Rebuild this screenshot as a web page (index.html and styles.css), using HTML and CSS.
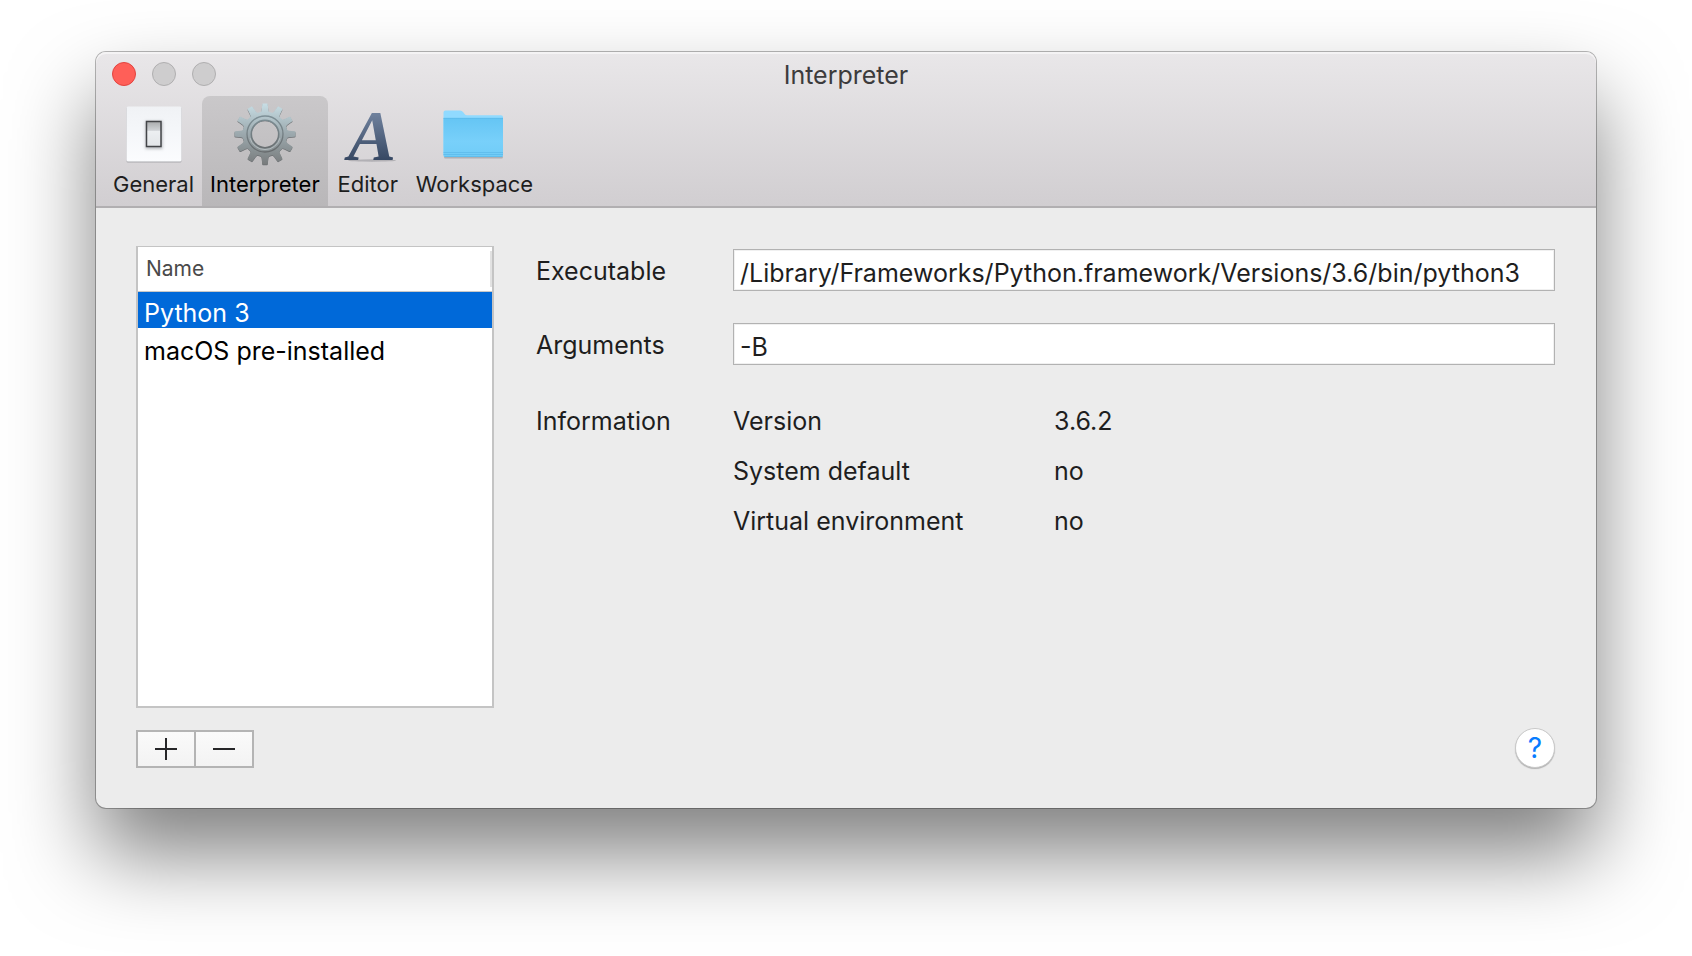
FILE: index.html
```html
<!DOCTYPE html>
<html lang="en">
<head>
<meta charset="utf-8">
<title>Interpreter</title>
<link rel="stylesheet" href="styles.css">
</head>
<body>
<main class="window">
  <header class="chrome">
    <div class="titlebar">
      <div class="lights">
        <button class="light light-close" type="button" aria-label="Close"></button>
        <button class="light" type="button" aria-label="Minimize"></button>
        <button class="light" type="button" aria-label="Zoom"></button>
      </div>
      <h1 class="title">Interpreter</h1>
    </div>
    <nav class="tabs">
      <button class="tab" type="button">
        <svg class="tab-icon" viewBox="0 0 64 64" aria-hidden="true">
          <defs>
            <linearGradient id="plate" x1="0" y1="0" x2="0" y2="1"><stop offset="0" stop-color="#f0f2f5"/><stop offset=".5" stop-color="#f5f7fa"/><stop offset="1" stop-color="#fbfcfe"/></linearGradient>
            <linearGradient id="rocker" x1="0" y1="0" x2="0" y2="1"><stop offset="0" stop-color="#a9abad"/><stop offset=".35" stop-color="#cfd2d5"/><stop offset=".4" stop-color="#eceff1"/><stop offset="1" stop-color="#e2e5e8"/></linearGradient>
            <filter id="soft" x="-50%" y="-50%" width="200%" height="200%"><feGaussianBlur stdDeviation="1.5"/></filter>
          </defs>
          <rect x="4.500" y="5" width="55" height="55.500" rx="1.500" fill="#a7a7ab"/>
          <rect x="4.500" y="4.500" width="55" height="55" rx="1.500" fill="url(#plate)"/>
          <rect x="23.500" y="19" width="17" height="28" fill="#8d9094" opacity=".6" filter="url(#soft)"/>
          <rect x="24.500" y="19.500" width="14.500" height="25" fill="url(#rocker)" stroke="#434548" stroke-width="1.500"/>
        </svg>
        <span>General</span>
      </button>
      <button class="tab tab-active" type="button" aria-current="page">
        <svg class="tab-icon" viewBox="-32 -32 64 64" aria-hidden="true">
          <defs>
            <linearGradient id="steel" gradientUnits="userSpaceOnUse" x1="0" y1="-31" x2="0" y2="31"><stop offset="0" stop-color="#c9dfe6"/><stop offset=".45" stop-color="#9fadb2"/><stop offset="1" stop-color="#787b7c"/></linearGradient>
            <linearGradient id="rim" gradientUnits="userSpaceOnUse" x1="0" y1="-20" x2="0" y2="20"><stop offset="0" stop-color="#7f9299"/><stop offset="1" stop-color="#66696b"/></linearGradient>
            <path id="tooth" d="M-5.800-20.500Q-3.500-21.500-3.300-24L-2.800-29.600Q-2.700-30.500-2-30.500H2Q2.700-30.500 2.800-29.600L3.300-24Q3.500-21.500 5.800-20.500Z"/>
            <g id="cog">
              <path fill-rule="evenodd" d="M0-22.500A22.500 22.500 0 1 1 0 22.500A22.500 22.500 0 1 1 0-22.500ZM0-13.500A13.500 13.500 0 1 0 0 13.500A13.500 13.500 0 1 0 0-13.500Z"/>
              <use href="#tooth"/><use href="#tooth" transform="rotate(30)"/><use href="#tooth" transform="rotate(60)"/><use href="#tooth" transform="rotate(90)"/><use href="#tooth" transform="rotate(120)"/><use href="#tooth" transform="rotate(150)"/><use href="#tooth" transform="rotate(180)"/><use href="#tooth" transform="rotate(210)"/><use href="#tooth" transform="rotate(240)"/><use href="#tooth" transform="rotate(270)"/><use href="#tooth" transform="rotate(300)"/><use href="#tooth" transform="rotate(330)"/>
            </g>
            <mask id="cogmask" maskUnits="userSpaceOnUse" x="-32" y="-32" width="64" height="64"><use href="#cog" fill="#fff"/></mask>
          </defs>
          <use href="#cog" y=".7" fill="#6d7073"/>
          <rect x="-32" y="-32" width="64" height="64" fill="url(#steel)" mask="url(#cogmask)"/>
          <circle r="18" fill="none" stroke="url(#rim)" stroke-width="1.300"/>
          <circle r="13.700" fill="none" stroke="url(#rim)" stroke-width="1.600"/>
          <path d="M-15 4A15.500 15.500 0 0 0 15 4" fill="none" stroke="#b3bbbe" stroke-width="1"/>
        </svg>
        <span>Interpreter</span>
      </button>
      <button class="tab" type="button">
        <svg class="tab-icon" viewBox="0 0 64 64" aria-hidden="true">
          <defs>
            <linearGradient id="ink" x1="0" y1="0" x2="0" y2="1"><stop offset="0.200" stop-color="#71839f"/><stop offset=".8" stop-color="#374863"/></linearGradient>
          </defs>
          <ellipse cx="36" cy="58.500" rx="24" ry="1.200" fill="#8c8c92" opacity=".5"/>
          <text class="letter" x="36" y="58" text-anchor="middle" fill="url(#ink)">A</text>
        </svg>
        <span>Editor</span>
      </button>
      <button class="tab" type="button">
        <svg class="tab-icon" viewBox="0 0 64 64" aria-hidden="true">
          <defs>
            <linearGradient id="folder" x1="0" y1="0" x2="0" y2="1"><stop offset="0" stop-color="#65c5f4"/><stop offset=".6" stop-color="#78d0fa"/><stop offset="1" stop-color="#70ccf7"/></linearGradient>
          </defs>
          <rect x="2" y="50" width="59" height="6.500" rx="1.500" fill="#9a9ea2" opacity=".7"/>
          <path d="M1.500 53V10.500Q1.500 8.500 3.500 8.500H18Q20 8.500 21 10L23 12.500Q23.500 13.200 25 13.200H59Q61 13.200 61 15V53Z" fill="#90daff"/>
          <path d="M1.500 16H61V53.500Q61 55 59.500 55H3Q1.500 55 1.500 53.500Z" fill="url(#folder)"/>
          <path d="M1.500 16.300H61M1.500 50.500H61M1.500 52.500H61M2.500 54.500H60" fill="none" stroke="#5ab8e8" stroke-width=".7"/>
        </svg>
        <span>Workspace</span>
      </button>
    </nav>
  </header>

  <div class="content">
    <section class="sidebar">
      <div class="list">
        <table class="names">
          <thead><tr><th scope="col">Name</th></tr></thead>
          <tbody>
            <tr class="selected"><td>Python 3</td></tr>
            <tr><td>macOS pre-installed</td></tr>
          </tbody>
        </table>
      </div>
      <div class="segmented">
        <button class="segment" type="button" aria-label="Add">
          <svg class="sign" viewBox="0 0 22 22" aria-hidden="true"><path d="M0 11H22M11 0V22"/></svg>
        </button>
        <button class="segment" type="button" aria-label="Remove">
          <svg class="sign" viewBox="0 0 22 22" aria-hidden="true"><path d="M0 11H22"/></svg>
        </button>
      </div>
    </section>

    <section class="detail">
      <form class="fields">
        <label class="label" for="executable">Executable</label>
        <input class="field" id="executable" type="text" value="/Library/Frameworks/Python.framework/Versions/3.6/bin/python3">
        <label class="label" for="arguments">Arguments</label>
        <input class="field" id="arguments" type="text" value="-B">
        <span class="info-label">Information</span>
        <dl class="info">
          <dt>Version</dt><dd>3.6.2</dd>
          <dt>System default</dt><dd>no</dd>
          <dt>Virtual environment</dt><dd>no</dd>
        </dl>
      </form>
      <button class="help" type="button" aria-label="Help">?</button>
    </section>
  </div>
</main>
</body>
</html>
```

FILE: styles.css
```css
* {
  box-sizing: border-box;
}

body {
  display: flex;
  min-height: 100vh;
  margin: 0;
  padding: 52px 96px 148px;
  background: #fff;
  color: #1e1e1e;
  font: 25px/30px Inter, "Liberation Sans", sans-serif;
}

button,
input {
  margin: 0;
  padding: 0;
  border: 0;
  color: inherit;
  font: inherit;
}

.window {
  display: flex;
  flex: 1;
  flex-direction: column;
  border-radius: 10px;
  background: #ececec;
  box-shadow: 0 0 0 1px rgba(0, 0, 0, 0.28), 0 46px 84px rgba(0, 0, 0, 0.5);
}

.chrome {
  border-bottom: 2px solid #b1afb1;
  border-radius: 10px 10px 0 0;
  background: linear-gradient(#e9e7e9, #d1ced1);
  box-shadow: inset 0 2px 0 #f4f3f4;
}

.titlebar {
  display: grid;
  grid-template-columns: 1fr auto 1fr;
  align-items: center;
  height: 44px;
  padding: 0 16px;
}

.lights {
  display: flex;
  gap: 16px;
}

.light {
  width: 24px;
  height: 24px;
  border: 1px solid #b0afb0;
  border-radius: 50%;
  background: #cecdce;
}

.light-close {
  border-color: #e2443f;
  background: #ff5f58;
}

.title {
  margin: 0;
  padding-top: 2px;
  color: #3c3b3c;
  font-size: 25px;
  font-weight: inherit;
}

.tabs {
  display: flex;
  padding: 0 9px;
}

.tab {
  display: flex;
  flex-direction: column;
  align-items: center;
  gap: 3px;
  height: 110px;
  padding: 6px 8px 0;
  border-radius: 8px 8px 0 0;
  background: none;
  font-size: 22px;
}

.tab-active {
  background: linear-gradient(#cac8ca, #b9b7b9);
  color: #000;
}

.tab-icon {
  width: 64px;
  height: 64px;
  overflow: visible;
}

.letter {
  font: italic bold 72px "Liberation Serif", serif;
}

.content {
  display: grid;
  flex: 1;
  grid-template-columns: 358px 1fr;
  gap: 42px;
  padding: 38px 41px 40px 40px;
}

.sidebar {
  display: flex;
  flex-direction: column;
  align-items: flex-start;
  gap: 22px;
}

.list {
  flex: 1;
  width: 100%;
  border: 2px solid #c4c4c4;
  border-top-width: 1px;
  background: #fff;
}

.names {
  width: 100%;
  border-collapse: separate;
  border-spacing: 0;
  color: #000;
  text-align: left;
}

.names th {
  height: 45px;
  padding: 0 8px;
  border-bottom: 1px solid #c8c8c8;
  background: linear-gradient(#e2e2e2, #e2e2e2) right center / 2px 36px no-repeat;
  color: #4a4a4a;
  font-size: 21px;
  font-weight: 400;
}

.names td {
  height: 38px;
  padding: 6px 6px 0;
  border-bottom: 2px solid #fff;
}

.selected td {
  background: #0069d9;
  background-clip: padding-box;
  color: #fff;
}

.segmented {
  display: flex;
  border: 2px solid #b4b4b4;
}

.segment {
  display: grid;
  place-items: center;
  width: 56px;
  height: 34px;
  background: linear-gradient(#fafafa, #f3f3f3);
}

.segment + .segment {
  width: 58px;
  border-left: 2px solid #b4b4b4;
}

.sign {
  width: 22px;
  height: 22px;
  fill: none;
  stroke: #262628;
  stroke-width: 2;
}

.detail {
  display: flex;
  flex-direction: column;
  justify-content: space-between;
}

.fields {
  display: grid;
  grid-template-columns: 197px 1fr;
  row-gap: 32px;
  align-items: center;
  padding-top: 3px;
}

.label {
  padding-top: 2px;
}

.field {
  width: 100%;
  height: 42px;
  padding: 6px 6px 0;
  border: 1px solid #b2b2b2;
  background: #fff;
  box-shadow: inset 0 0 0 1px #f0f0f0;
}

.info-label {
  align-self: start;
  padding-top: 9px;
}

.info {
  display: grid;
  grid-template-columns: 321px 1fr;
  row-gap: 20px;
  margin: 0;
  padding-top: 9px;
}

.info dd {
  margin: 0;
}

.help {
  align-self: flex-end;
  width: 40px;
  height: 40px;
  border: 1px solid #c9c9c9;
  border-radius: 50%;
  background: #fff;
  box-shadow: 0 1px 1px rgba(0, 0, 0, 0.25);
  color: #087cff;
  font-size: 28px;
}
```
